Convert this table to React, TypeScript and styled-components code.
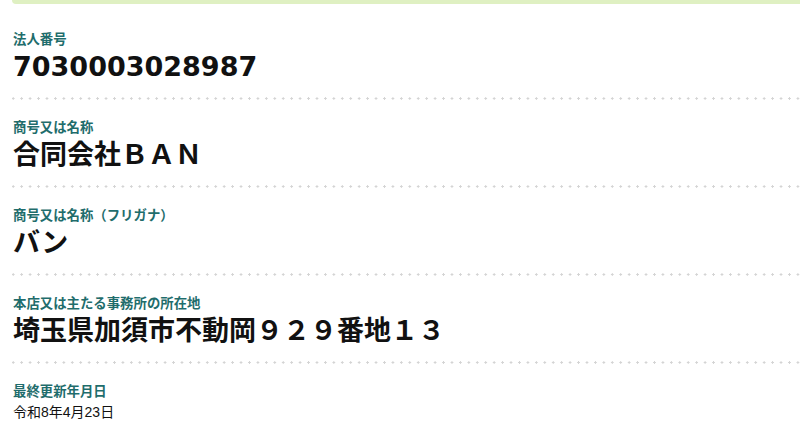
import React from "react";
import styled, { createGlobalStyle } from "styled-components";

const Global = createGlobalStyle`
  html, body { margin: 0; padding: 0; background: #ffffff; }
  body { font-family: "Liberation Sans", "Noto Sans CJK JP", sans-serif; }
`;

const Page = styled.div`
  width: 800px;
  height: 434px;
  overflow: hidden;
  background: #ffffff;
`;

const TopBar = styled.div`
  margin-left: 12px;
  height: 4px;
  background: #dff0c2;
  border-bottom-left-radius: 4px;
`;

const List = styled.dl`
  margin: 8px 0 0 12px;
  padding: 0;
  display: flex;
  flex-direction: column;
`;

const Item = styled.div<{ $last?: boolean }>`
  display: flex;
  flex-direction: column;
  gap: 4px;
  padding: 18px 0 16px 1px;
  background-image: ${(p) =>
    p.$last ? "none" : "radial-gradient(circle, #d4d4d4 1px, transparent 1.3px)"};
  background-size: 8.45px 3px;
  background-repeat: repeat-x;
  background-position: -3px 100%;
  padding-bottom: ${(p) => (p.$last ? "0" : "16px")};
`;

const Label = styled.dt`
  margin: 0;
  font-family: "Noto Sans CJK JP", sans-serif;
  font-size: 13.4px;
  line-height: 16px;
  font-weight: 700;
  color: #1f6d6c;
`;

const Value = styled.dd<{ $small?: boolean; $number?: boolean }>`
  margin: 0;
  font-family: ${(p) =>
    p.$number
      ? `"DejaVu Sans", "Noto Sans CJK JP", sans-serif`
      : `"Liberation Sans", "Noto Sans CJK JP", sans-serif`};
  font-size: ${(p) => (p.$small ? "14px" : "27px")};
  line-height: ${(p) => (p.$small ? "20px" : "34px")};
  font-weight: ${(p) => (p.$small ? 400 : 700)};
  color: #111111;
`;

const rows: { label: string; value: string; small?: boolean; number?: boolean }[] = [
  { label: "法人番号", value: "7030003028987", number: true },
  { label: "商号又は名称", value: "合同会社ＢＡＮ" },
  { label: "商号又は名称（フリガナ）", value: "バン" },
  { label: "本店又は主たる事務所の所在地", value: "埼玉県加須市不動岡９２９番地１３" },
  { label: "最終更新年月日", value: "令和8年4月23日", small: true },
];

export default function App() {
  return (
    <Page>
      <Global />
      <TopBar />
      <List>
        {rows.map((r, i) => (
          <Item key={r.label} $last={i === rows.length - 1}>
            <Label>{r.label}</Label>
            <Value $small={r.small} $number={r.number}>
              {r.value}
            </Value>
          </Item>
        ))}
      </List>
    </Page>
  );
}
